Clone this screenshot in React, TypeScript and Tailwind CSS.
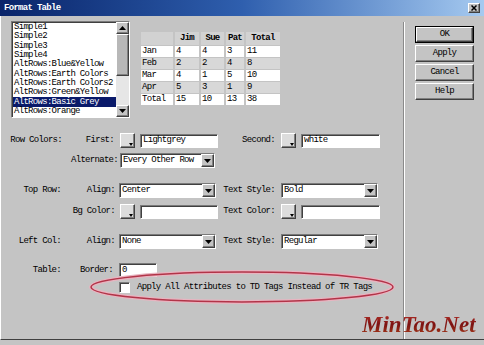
import React from "react";

const sunken =
  "border border-t-[#7a7a7a] border-l-[#7a7a7a] border-b-white border-r-white shadow-[inset_1px_1px_0_#404040]";
const raised =
  "border border-t-white border-l-white border-b-[#404040] border-r-[#404040] shadow-[inset_-1px_-1px_0_#808080]";

function Arrow({ up }: { up?: boolean }) {
  return (
    <svg width="7" height="4" viewBox="0 0 7 4">
      {up ? <polygon points="0,4 7,4 3.5,0" fill="#000" /> : <polygon points="0,0 7,0 3.5,4" fill="#000" />}
    </svg>
  );
}

function Select({ value, w }: { value: string; w: string }) {
  return (
    <div className={`${w} h-[15px] bg-white flex items-stretch ${sunken}`}>
      <div className="flex-1 pl-[2px] flex items-center overflow-hidden whitespace-nowrap">{value}</div>
      <div className={`w-[13px] bg-[#c4c4c4] flex items-center justify-center ${raised}`}>
        <Arrow />
      </div>
    </div>
  );
}

function Swatch() {
  return (
    <div className={`w-[15px] h-[15px] bg-[#dcdcdc] relative ${raised}`}>
      <div className="absolute right-[1px] bottom-[1px]">
        <svg width="4" height="3" viewBox="0 0 4 3">
          <polygon points="0,0 4,0 2,3" fill="#000" />
        </svg>
      </div>
    </div>
  );
}

function Input({ value, w }: { value?: string; w: string }) {
  return (
    <div className={`${w} h-[14px] bg-white pl-[2px] flex items-center whitespace-nowrap ${sunken}`}>
      {value}
    </div>
  );
}

function ColorField({ value, inputW }: { value?: string; inputW: string }) {
  return (
    <div className="flex items-center gap-[5px]">
      <Swatch />
      <Input value={value} w={inputW} />
    </div>
  );
}

function Btn({ label, def }: { label: string; def?: boolean }) {
  return (
    <div className={`w-[59px] h-[17px] ${def ? "border border-black" : ""}`}>
      <div className={`w-full h-full bg-[#c4c4c4] flex items-center justify-center ${raised}`}>{label}</div>
    </div>
  );
}

const items = [
  "Simple1",
  "Simple2",
  "Simple3",
  "Simple4",
  "AltRows:Blue&Yellow",
  "AltRows:Earth Colors",
  "AltRows:Earth Colors2",
  "AltRows:Green&Yellow",
  "AltRows:Basic Grey",
  "AltRows:Orange",
];

const tableRows = [
  ["Jan", "4", "4", "3", "11"],
  ["Feb", "2", "2", "4", "8"],
  ["Mar", "4", "1", "5", "10"],
  ["Apr", "5", "3", "1", "9"],
  ["Total", "15", "10", "13", "38"],
];

export default function App() {
  return (
    <div className="w-[484px] h-[345px] relative overflow-hidden bg-[#c4c4c4] text-[9px] tracking-[-0.7px] text-black font-['Liberation_Mono','DejaVu_Sans_Mono',monospace] leading-none">
      {/* Title bar */}
      <div className="h-[16px] flex items-center justify-between pl-[4px] pr-[4px] bg-gradient-to-r from-[#0a246a] via-[#2f5fae] to-[#a6caf0]">
        <span className="text-white font-bold">Format Table</span>
        <div className={`w-[12px] h-[10px] bg-[#c4c4c4] flex items-center justify-center ${raised}`}>
          <svg width="6" height="6" viewBox="0 0 6 6">
            <path d="M0.5 0.5 L5.5 5.5 M5.5 0.5 L0.5 5.5" stroke="#000" strokeWidth="1.5" />
          </svg>
        </div>
      </div>

      <div className="flex h-[324px] border-l border-l-white border-b border-b-[#404040]">
        {/* Left main area */}
        <div className="w-[402px] flex flex-col">
          <div className="flex pt-[5px] pl-[10px]">
            {/* list box */}
            <div className={`w-[119px] h-[97px] bg-white flex ${sunken}`}>
              <div className="flex-1 overflow-hidden pl-[1px] pt-[1px]">
                {items.map((it) => (
                  <div
                    key={it}
                    className={`h-[9.3px] flex items-center pl-[1px] whitespace-nowrap ${
                      it === "AltRows:Basic Grey" ? "bg-[#0a1a6a] text-white" : ""
                    }`}
                  >
                    {it}
                  </div>
                ))}
              </div>
              <div className="w-[13px] flex flex-col bg-[#e6e6e6]">
                <div className={`h-[12px] bg-[#c4c4c4] flex items-center justify-center ${raised}`}>
                  <Arrow up />
                </div>
                <div className={`h-[42px] bg-[#b8b8b8] ${raised}`} />
                <div className="flex-1" />
                <div className={`h-[12px] bg-[#c4c4c4] flex items-center justify-center ${raised}`}>
                  <Arrow />
                </div>
              </div>
            </div>

            {/* preview table */}
            <div className="ml-[11px] mt-[11px] grid grid-cols-[32px_24px_23px_18px_34px] gap-x-[2px] gap-y-[1px] h-fit">
              {["", "Jim", "Sue", "Pat", "Total"].map((h, i) => (
                <div key={i} className="h-[13px] bg-[#d2d2d2] flex items-center justify-center font-bold">
                  {h}
                </div>
              ))}
              {tableRows.map((r, ri) =>
                r.map((c, ci) => (
                  <div
                    key={`${ri}-${ci}`}
                    className={`h-[11px] pl-[1px] flex items-center ${ri % 2 === 0 ? "bg-white" : "bg-[#d8d8d8]"}`}
                  >
                    {c}
                  </div>
                ))
              )}
            </div>
          </div>

          {/* form */}
          <div className="flex flex-col">
            <div className="flex items-center h-[15px] mt-[15px]">
              <span className="w-[61px] text-right">Row Colors:</span>
              <span className="w-[52px] text-right">First:</span>
              <div className="w-[99px] ml-[6px]">
                <ColorField value="Lightgrey" inputW="w-[78px]" />
              </div>
              <span className="w-[56px] text-right">Second:</span>
              <div className="ml-[6px]">
                <ColorField value="white" inputW="w-[79px]" />
              </div>
            </div>

            <div className="flex items-center h-[15px] mt-[5px]">
              <span className="w-[61px]" />
              <span className="w-[56px] text-right">Alternate:</span>
              <div className="ml-[2px]">
                <Select value="Every Other Row" w="w-[95px]" />
              </div>
            </div>

            <div className="flex items-center h-[15px] mt-[15px]">
              <span className="w-[60px] text-right">Top Row:</span>
              <span className="w-[54px] text-right">Align:</span>
              <div className="w-[100px] ml-[4px]">
                <Select value="Center" w="w-[97px]" />
              </div>
              <span className="w-[56px] text-right">Text Style:</span>
              <div className="ml-[6px]">
                <Select value="Bold" w="w-[97px]" />
              </div>
            </div>

            <div className="flex items-center h-[15px] mt-[6px]">
              <span className="w-[60px]" />
              <span className="w-[54px] text-right">Bg Color:</span>
              <div className="w-[100px] ml-[5px]">
                <ColorField inputW="w-[78px]" />
              </div>
              <span className="w-[55px] text-right">Text Color:</span>
              <div className="ml-[6px]">
                <ColorField inputW="w-[79px]" />
              </div>
            </div>

            <div className="flex items-center h-[15px] mt-[15px]">
              <span className="w-[60px] text-right">Left Col:</span>
              <span className="w-[54px] text-right">Align:</span>
              <div className="w-[100px] ml-[4px]">
                <Select value="None" w="w-[97px]" />
              </div>
              <span className="w-[56px] text-right">Text Style:</span>
              <div className="ml-[6px]">
                <Select value="Regular" w="w-[97px]" />
              </div>
            </div>

            <div className="flex items-center h-[14px] mt-[14px]">
              <span className="w-[60px] text-right">Table:</span>
              <span className="w-[52px] text-right">Border:</span>
              <div className="ml-[6px]">
                <Input value="0" w="w-[38px]" />
              </div>
            </div>

            <div className="flex items-center h-[11px] mt-[5px] pl-[118px]">
              <div className={`w-[11px] h-[11px] bg-white ${sunken}`} />
              <span className="ml-[7px] whitespace-nowrap">Apply All Attributes to TD Tags Instead of TR Tags</span>
            </div>
          </div>
        </div>

        {/* separator */}
        <div className="mt-[6px] w-[2px] border-l border-l-[#8a8a8a] border-r border-r-white" />

        {/* buttons */}
        <div className="flex flex-col gap-[2px] pl-[10px] pt-[10px]">
          <Btn label="OK" def />
          <Btn label="Apply" />
          <Btn label="Cancel" />
          <Btn label="Help" />
        </div>
      </div>

      {/* red ellipse annotation */}
      <svg className="absolute left-[87px] top-[269px]" width="310" height="36" viewBox="0 0 310 36">
        <ellipse cx="155" cy="18" rx="151" ry="15" fill="none" stroke="#e8b4c0" strokeWidth="4" />
        <ellipse cx="155" cy="18" rx="151" ry="15" fill="none" stroke="#b23448" strokeWidth="1.5" />
      </svg>

      {/* watermark */}
      <div className="absolute left-[362px] top-[313px] text-[23px] tracking-normal font-bold italic font-['Liberation_Serif',serif] leading-none bg-gradient-to-b from-[#b8322a] via-[#7c1212] to-[#a83a1a] bg-clip-text text-transparent">
        MinTao.Net
      </div>
    </div>
  );
}
